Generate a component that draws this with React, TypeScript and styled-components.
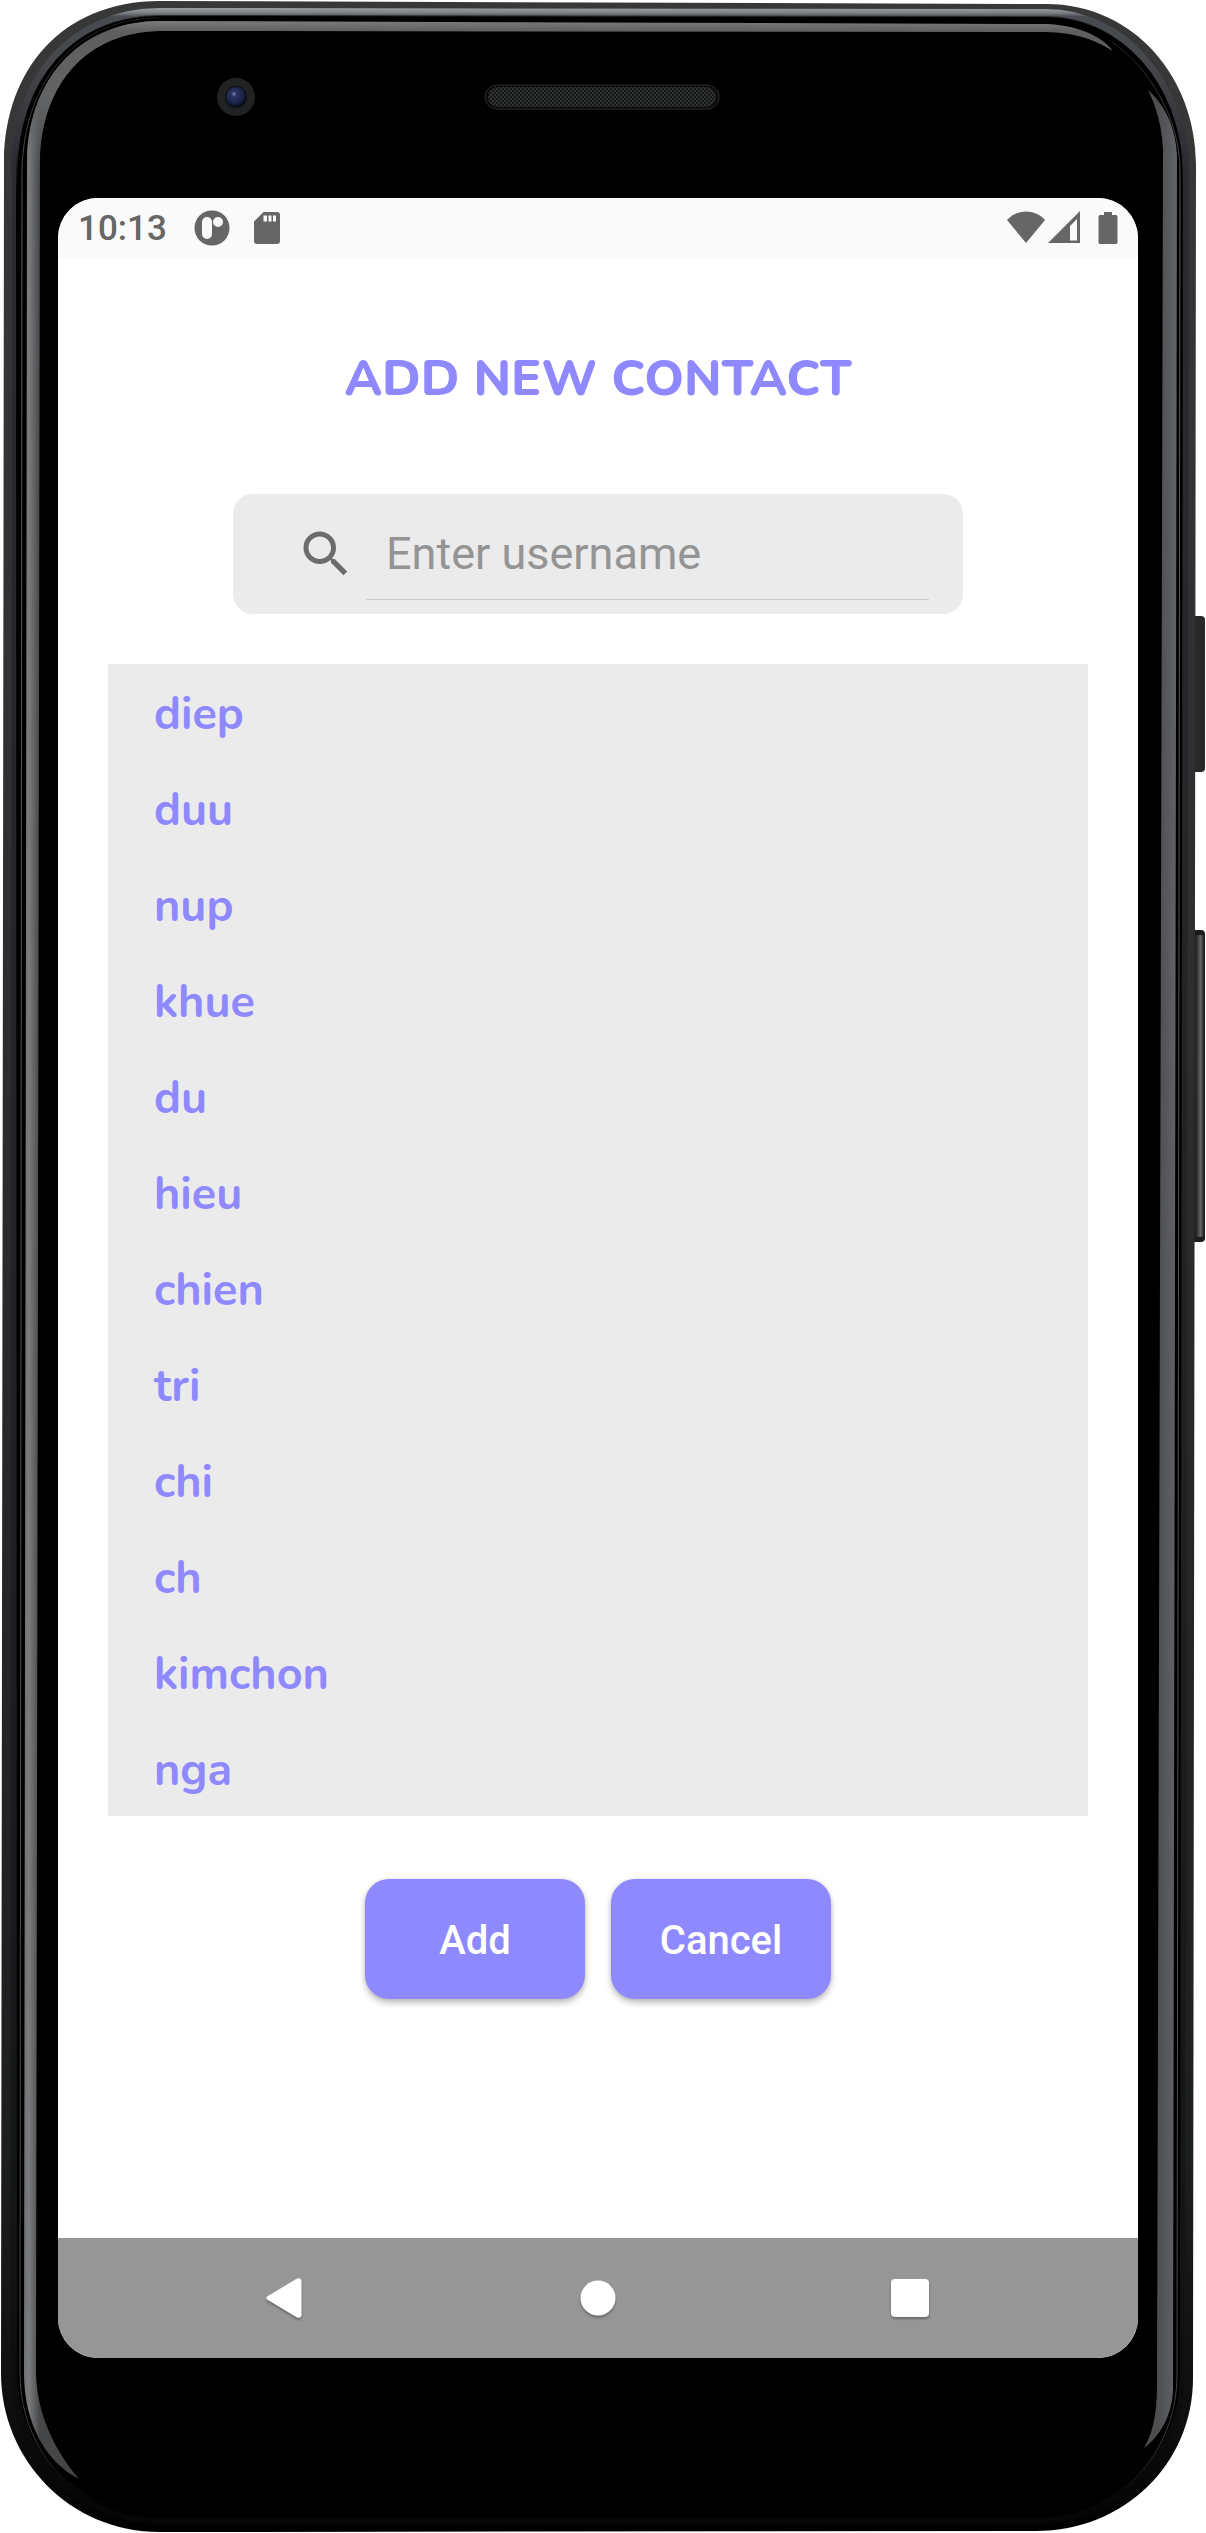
import React, { useState } from "react";
import styled, { createGlobalStyle } from "styled-components";

const GlobalStyle = createGlobalStyle`
  *, *::before, *::after { box-sizing: border-box; }
  body { margin: 0; background: #ffffff; }
`;

const accent = "#8f89ff";
const ui = `Roboto, "Liberation Sans", sans-serif`;
const rounded = `Nunito, Lato, "Open Sans", sans-serif`;

const Device = styled.div`
  position: relative;
  display: flex;
  width: 100%;
  min-height: 100vh;
  padding: 198px 68px 175px 58px;
`;

const Shell = styled.svg`
  position: absolute;
  inset: 0;
  width: 100%;
  height: 100%;
`;

const Screen = styled.div`
  position: relative;
  flex: 1;
  min-width: 0;
  display: flex;
  flex-direction: column;
  overflow: hidden;
  border-radius: 40px;
  background: #ffffff;
`;

const StatusBar = styled.header`
  display: flex;
  align-items: center;
  height: 60px;
  padding: 0 10px 0 20px;
  background: #fafafa;
  color: #666666;
`;

const Clock = styled.time`
  margin-right: 25px;
  padding-top: 2px;
  font: 500 35px/60px ${ui};
`;

const StatusIcon = styled.svg<{ $gap?: number }>`
  flex: none;
  width: 40px;
  height: 40px;
  margin-right: ${(p) => p.$gap ?? 0}px;
  fill: currentColor;
`;

const Spacer = styled.div`
  flex: 1;
`;

const Main = styled.main`
  flex: 1;
  display: flex;
  flex-direction: column;
  align-items: center;
  padding: 89px 50px 0;
`;

const Title = styled.h1`
  margin: 0;
  color: ${accent};
  text-align: center;
  font: 800 50px/64px ${rounded};
`;

const SearchBox = styled.label`
  display: flex;
  align-items: center;
  gap: 10px;
  width: 100%;
  max-width: 730px;
  height: 120px;
  margin-top: 83px;
  padding: 0 34px 0 63px;
  border-radius: 20px;
  background: #ebebeb;
`;

const SearchIcon = styled.svg`
  flex: none;
  width: 60px;
  height: 60px;
  fill: #6c6c6c;
`;

const SearchInput = styled.input`
  flex: 1;
  min-width: 0;
  height: 92px;
  padding: 0 20px;
  border: 0;
  border-bottom: 1px solid #cccccc;
  border-radius: 0;
  outline: 0;
  background: transparent;
  color: #222222;
  font: 400 45px/60px ${ui};
  &::placeholder {
    color: #949494;
    opacity: 1;
  }
`;

const ContactList = styled.ul`
  align-self: stretch;
  margin: 50px 0 0;
  padding: 0;
  list-style: none;
  background: #ebebeb;
`;

const ContactRow = styled.li`
  display: flex;
  align-items: center;
  height: 96px;
  padding: 6px 46px 0;
  color: ${accent};
  font: 700 45px/60px ${rounded};
`;

const Actions = styled.div`
  display: flex;
  gap: 26px;
  margin: 63px 0;
`;

const ActionButton = styled.button`
  width: 220px;
  height: 120px;
  padding: 4px 0 0;
  border: 0;
  border-radius: 24px;
  background: ${accent};
  box-shadow: 0 4px 6px rgba(0, 0, 0, 0.24), 0 0 4px rgba(0, 0, 0, 0.1);
  color: #ffffff;
  font: 500 40px/48px ${ui};
`;

const NavBar = styled.nav`
  display: flex;
  justify-content: center;
  height: 120px;
  background: #969696;
`;

const NavButton = styled.button`
  display: flex;
  align-items: center;
  justify-content: center;
  width: 100%;
  max-width: 312px;
  padding: 0;
  border: 0;
  background: transparent;
`;

const NavIcon = styled.svg`
  width: 48px;
  height: 48px;
  fill: #ffffff;
  filter: drop-shadow(0 2px 1px rgba(0, 0, 0, 0.3));
`;

function PhoneShell() {
  return (
    <Shell viewBox="0 0 1206 2533" preserveAspectRatio="none" aria-hidden="true">
      <defs>
        <linearGradient id="rim" gradientUnits="userSpaceOnUse" x1="0" y1="7" x2="0" y2="200">
          <stop offset="0" stopColor="#a0a5aa" />
          <stop offset="0.03" stopColor="#7d8186" />
          <stop offset="0.05" stopColor="#484b50" />
          <stop offset="0.3" stopColor="#45474b" />
          <stop offset="0.7" stopColor="#303136" />
          <stop offset="1" stopColor="#2b2c30" stopOpacity="0" />
        </linearGradient>
        <linearGradient id="casing" gradientUnits="userSpaceOnUse" x1="0" y1="0" x2="0" y2="2533">
          <stop offset="0" stopColor="#383838" />
          <stop offset="0.4" stopColor="#2d2d2d" />
          <stop offset="0.85" stopColor="#1d1e1e" />
          <stop offset="0.96" stopColor="#0d0d0e" />
          <stop offset="1" stopColor="#000000" />
        </linearGradient>
        <linearGradient id="innerEdge" gradientUnits="userSpaceOnUse" x1="0" y1="100" x2="0" y2="2510">
          <stop offset="0" stopColor="#2b2c30" />
          <stop offset="0.6" stopColor="#1f2023" />
          <stop offset="0.9" stopColor="#131416" />
          <stop offset="1" stopColor="#060607" />
        </linearGradient>
        <linearGradient id="seam" gradientUnits="userSpaceOnUse" x1="0" y1="20" x2="0" y2="2510">
          <stop offset="0" stopColor="#1a1b1d" />
          <stop offset="0.08" stopColor="#5b5c5e" />
          <stop offset="0.9" stopColor="#4a4b4d" />
          <stop offset="0.97" stopColor="#3a3b3d" />
          <stop offset="1" stopColor="#000000" />
        </linearGradient>
        <linearGradient id="bandLeft" gradientUnits="userSpaceOnUse" x1="24" y1="0" x2="40" y2="0">
          <stop offset="0" stopColor="#6e6f71" />
          <stop offset="0.3" stopColor="#7b7c7e" />
          <stop offset="1" stopColor="#454648" />
        </linearGradient>
        <linearGradient id="bandTop" gradientUnits="userSpaceOnUse" x1="0" y1="21" x2="0" y2="170">
          <stop offset="0" stopColor="#7c7c7c" />
          <stop offset="0.07" stopColor="#5e5e5f" />
          <stop offset="0.5" stopColor="#636465" />
          <stop offset="1" stopColor="#6b6c6d" stopOpacity="0" />
        </linearGradient>
        <linearGradient id="bandRight" gradientUnits="userSpaceOnUse" x1="1157" y1="0" x2="1177" y2="0">
          <stop offset="0" stopColor="#4c4d4f" />
          <stop offset="1" stopColor="#626366" />
        </linearGradient>
        <linearGradient id="key" x1="0" y1="0" x2="1" y2="0">
          <stop offset="0" stopColor="#1a1a1a" />
          <stop offset="0.35" stopColor="#404040" />
          <stop offset="0.6" stopColor="#666666" />
          <stop offset="1" stopColor="#262626" />
        </linearGradient>
        <radialGradient id="lens" cx="0.4" cy="0.35" r="0.65">
          <stop offset="0" stopColor="#8088ac" />
          <stop offset="0.2" stopColor="#2a3565" />
          <stop offset="0.7" stopColor="#1a2346" />
          <stop offset="1" stopColor="#0a0d1c" />
        </radialGradient>
        <pattern id="mesh" width="4" height="4" patternUnits="userSpaceOnUse">
          <rect width="4" height="4" fill="#181919" />
          <path d="M0 0h2v2h-2zM2 2h2v2h-2z" fill="#303232" />
        </pattern>
      </defs>

      <rect x="1190" y="616" width="15" height="156" rx="4" fill="#292929" />
      <rect x="1190" y="930" width="15" height="312" rx="4" fill="#1c1c1c" />
      <rect x="1195" y="935" width="9" height="302" rx="3" fill="url(#key)" />

      <path
        d="M4 160C5 72 60 1 160 1L1046 4C1136 4 1196 80 1196 164L1193 2378C1193 2464 1124 2531 1036 2531L160 2532C70 2532 1 2460 1 2373Z"
        fill="url(#casing)"
      />
      <path
        d="M12 170C13 76 68 8 160 8L1046 9C1128 9 1189 84 1189 168L1185 2378C1185 2458 1120 2524 1036 2524L160 2524C76 2524 10 2456 10 2373Z"
        fill="url(#innerEdge)"
      />
      <path
        d="M16 170C18 80 72 16 160 16L1046 17C1122 17 1182 86 1183 168L1180 2378C1178 2452 1116 2518 1036 2518L160 2518C82 2518 18 2452 17 2373Z"
        fill="#000000"
      />
      <path
        d="M14 200V170C15 80 70 11.500 160 11.500L1046 12.500C1126 12.500 1184 86 1186 168V200"
        fill="none"
        stroke="url(#rim)"
        strokeWidth="7"
      />
      <path
        d="M160 18C76 17 24 82 22 170L20 2373C20 2430 50 2482 104 2504M1112 42C1150 68 1180 120 1180 170L1177 2378C1176 2436 1142 2484 1096 2506"
        fill="none"
        stroke="url(#seam)"
        strokeWidth="1"
      />
      <path
        d="M27 160L24 2373C24 2424 46 2462 79 2479C56 2452 37 2416 36 2373L40 160C42 82 88 32 160 31V21C84 21 29 74 27 160Z"
        fill="url(#bandLeft)"
      />
      <path
        d="M27 170V160C29 74 84 21 160 21L1046 24C1074 25 1100 34 1113 51C1092 38 1074 33 1046 32L160 31C88 32 42 82 40 160V170Z"
        fill="url(#bandTop)"
      />
      <path
        d="M1148 90C1168 108 1176 132 1177 156L1173 2390C1172 2416 1160 2436 1144 2448C1152 2434 1156 2420 1157 2390L1163 150C1162 126 1156 106 1148 90Z"
        fill="url(#bandRight)"
      />

      <circle cx="236" cy="97" r="19" fill="#202223" />
      <circle cx="236" cy="97" r="11" fill="#0d0f14" />
      <circle cx="236" cy="97" r="10" fill="url(#lens)" />
      <rect x="485" y="85" width="234" height="24" rx="12" fill="#0a0a0a" stroke="#2b2c2c" strokeWidth="1" />
      <rect x="488" y="87" width="228" height="20" rx="10" fill="url(#mesh)" />
    </Shell>
  );
}

const contacts = ["diep", "duu", "nup", "khue", "du", "hieu", "chien", "tri", "chi", "ch", "kimchon", "nga"];

export default function App() {
  const [query, setQuery] = useState("");
  const visible = contacts.filter((name) => name.includes(query.trim().toLowerCase()));

  return (
    <>
      <GlobalStyle />
      <Device>
        <PhoneShell />
        <Screen>
          <StatusBar>
            <Clock>10:13</Clock>
            <StatusIcon $gap={15} viewBox="0 0 40 40" aria-hidden="true">
              <path
                fillRule="evenodd"
                d="M20 2.500a17.500 17.500 0 1 0 0 35a17.500 17.500 0 1 0 0-35ZM15 9a5 5 0 0 1 5 5v12a5 5 0 0 1-10 0V14a5 5 0 0 1 5-5ZM26 9a5 5 0 1 1 0 10a5 5 0 1 1 0-10Z"
              />
            </StatusIcon>
            <StatusIcon viewBox="0 0 40 40" aria-hidden="true">
              <path
                fillRule="evenodd"
                d="M16.500 4H30a3 3 0 0 1 3 3v26a3 3 0 0 1-3 3H10a3 3 0 0 1-3-3V13.500ZM16.500 7.500v6h3.500v-6ZM21.500 7.500v6h3v-6ZM26 7.500v6h3v-6Z"
              />
            </StatusIcon>
            <Spacer />
            <StatusIcon viewBox="0 0 40 40" aria-hidden="true">
              <path d="M1 12C11 0.500 29 0.500 39 12L20 35Z" />
            </StatusIcon>
            <StatusIcon $gap={2} viewBox="0 0 40 40" aria-hidden="true">
              <path fillRule="evenodd" d="M34 3V35H2ZM31 11L24 18V32.500H31Z" />
            </StatusIcon>
            <StatusIcon viewBox="0 0 40 40" aria-hidden="true">
              <path d="M16 4h8v3h4a1.500 1.500 0 0 1 1.500 1.500v26a1.500 1.500 0 0 1-1.500 1.500H12a1.500 1.500 0 0 1-1.500-1.500v-26A1.500 1.500 0 0 1 12 7h4Z" />
            </StatusIcon>
          </StatusBar>

          <Main>
            <Title>ADD NEW CONTACT</Title>
            <SearchBox>
              <SearchIcon viewBox="0 0 24 24" aria-hidden="true">
                <path d="M15.500 14h-.79l-.28-.27A6.471 6.471 0 0 0 16 9.500 6.500 6.500 0 1 0 9.500 16c1.610 0 3.090-.59 4.230-1.570l.27.28v.79l5 4.990L20.490 19l-4.990-5zm-6 0C7.010 14 5 11.990 5 9.500S7.010 5 9.500 5 14 7.010 14 9.500 11.990 14 9.500 14z" />
              </SearchIcon>
              <SearchInput
                type="text"
                aria-label="Enter username"
                placeholder="Enter username"
                value={query}
                onChange={(e) => setQuery(e.target.value)}
              />
            </SearchBox>
            <ContactList>
              {visible.map((name) => (
                <ContactRow key={name}>{name}</ContactRow>
              ))}
            </ContactList>
            <Actions>
              <ActionButton type="button">Add</ActionButton>
              <ActionButton type="button">Cancel</ActionButton>
            </Actions>
          </Main>

          <NavBar>
            <NavButton type="button" aria-label="Back">
              <NavIcon viewBox="0 0 48 48">
                <path d="M5.500 22.200L35 4.600a3 3 0 0 1 4.500 2.500v33.800a3 3 0 0 1-4.500 2.500L5.500 25.800a2 2 0 0 1 0-3.600Z" />
              </NavIcon>
            </NavButton>
            <NavButton type="button" aria-label="Home">
              <NavIcon viewBox="0 0 48 48">
                <circle cx="24" cy="24" r="17.500" />
              </NavIcon>
            </NavButton>
            <NavButton type="button" aria-label="Overview">
              <NavIcon viewBox="0 0 48 48">
                <rect x="5" y="5" width="38" height="38" rx="4" />
              </NavIcon>
            </NavButton>
          </NavBar>
        </Screen>
      </Device>
    </>
  );
}
